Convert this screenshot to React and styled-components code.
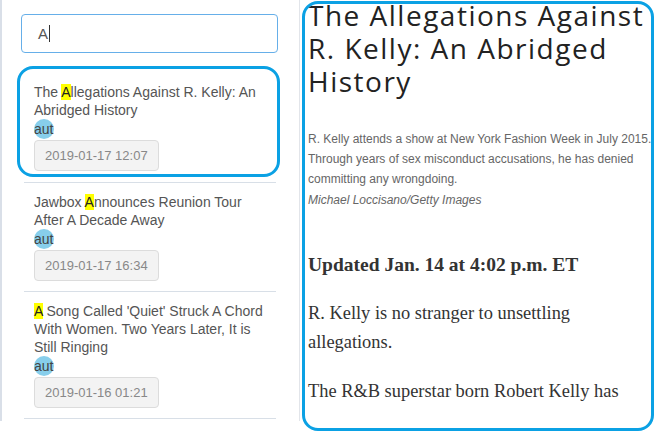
import React from 'react';
import styled, { createGlobalStyle } from 'styled-components';

const GlobalStyle = createGlobalStyle`
  html, body {
    margin: 0;
    padding: 0;
    background: #ffffff;
  }
  * {
    box-sizing: border-box;
  }
`;

// layout
const Page = styled.div`
  display: flex;
  align-items: flex-start;
  width: 655px;
  height: 439px;
  overflow: hidden;
  font-family: 'Liberation Sans', Arial, sans-serif;
`;

const Sidebar = styled.div`
  width: 300px;
  height: 421px;
  flex-shrink: 0;
  border-left: 2px solid #d9dfe8;
  border-right: 1px solid #e2e5ea;
  padding-top: 14px;
`;

const SearchBox = styled.div`
  display: flex;
  align-items: center;
  margin-left: 19px;
  width: 257px;
  height: 39px;
  padding-left: 16px;
  border: 1px solid #66afe9;
  border-radius: 4px;
  font-size: 15px;
  color: #555;
`;

const Caret = styled.span`
  display: inline-block;
  width: 1px;
  height: 17px;
  margin-left: 1px;
  background: #333;
`;

const List = styled.ul`
  list-style: none;
  margin: 13px 0 0 22px;
  padding: 0;
  width: 252px;
`;

const Entry = styled.li`
  padding: ${(p) => (p.$active ? '0 0 5px 0' : '10px 10px 10px')};
  border-bottom: 1px solid #d8dfe7;
`;

const ActiveCard = styled.div`
  margin: 0 -4px 0 -7px;
  padding: 14px 10px 3px 14px;
  border: 3px solid #0ba1e4;
  border-radius: 16px;
`;

const Title = styled.div`
  font-size: 14px;
  line-height: 18px;
  color: #555;
`;

const Mark = styled.span`
  background: #ffff00;
  color: #222;
`;

const Tag = styled.span`
  display: inline-block;
  min-width: 20px;
  height: 20px;
  line-height: 20px;
  border-radius: 50%;
  background: #87ceeb;
  font-size: 14px;
  color: #444;
`;

const DateBox = styled.div`
  display: inline-block;
  margin-top: 1px;
  padding: 0 10px;
  height: 31px;
  line-height: 29px;
  background: #f3f3f3;
  border: 1px solid #dcdcdc;
  border-radius: 4px;
  font-size: 13px;
  color: #888;
`;

const Reader = styled.div`
  width: 352px;
  height: 430px;
  margin: 1px 0 0 2px;
  border: 3px solid #0ba1e4;
  border-radius: 16px;
  padding: 0 0 0 3px;
  overflow: hidden;
`;

const Headline = styled.h1`
  margin: -5px 0 0;
  font-family: 'Open Sans', sans-serif;
  font-weight: 400;
  font-size: 28px;
  line-height: 33px;
  color: #222;
  letter-spacing: 1.5px;
`;

const Caption = styled.p`
  margin: 31px 0 0;
  font-size: 12px;
  line-height: 20px;
  color: #666;
  white-space: nowrap;
`;

const Credit = styled.p`
  margin: 1px 0 0;
  font-size: 12px;
  line-height: 20px;
  font-style: italic;
  color: #666;
`;

const Body = styled.p`
  margin: ${(p) => p.$top || '20px'} 0 0;
  font-family: 'Liberation Serif', Georgia, serif;
  font-size: ${(p) => (p.$bold ? '19.5px' : '18.4px')};
  line-height: 29px;
  color: #333;
  font-weight: ${(p) => (p.$bold ? 700 : 400)};
`;

const items = [
  { pre: 'The ', hit: 'A', post: 'llegations Against R. Kelly: An Abridged History', date: '2019-01-17 12:07' },
  { pre: 'Jawbox ', hit: 'A', post: 'nnounces Reunion Tour After A Decade Away', date: '2019-01-17 16:34' },
  { pre: '', hit: 'A', post: " Song Called 'Quiet' Struck A Chord With Women. Two Years Later, It is Still Ringing", date: '2019-01-16 01:21' },
];

const ItemBody = ({ item }) => (
  <>
    <Title>
      {item.pre}
      <Mark>{item.hit}</Mark>
      {item.post}
    </Title>
    <Tag>aut</Tag>
    <div>
      <DateBox>{item.date}</DateBox>
    </div>
  </>
);

const App = () => {
  return (
    <Page>
      <GlobalStyle />
      <Sidebar>
        <SearchBox>
          A<Caret />
        </SearchBox>
        <List>
          {items.map((item, i) => (
            <Entry key={item.date} $active={i === 0}>
              {i === 0 ? (
                <ActiveCard>
                  <ItemBody item={item} />
                </ActiveCard>
              ) : (
                <ItemBody item={item} />
              )}
            </Entry>
          ))}
        </List>
      </Sidebar>

      <Reader>
        <Headline>The Allegations Against R. Kelly: An Abridged History</Headline>
        <Caption>
          R. Kelly attends a show at New York Fashion Week in July 2015.
          <br />
          Through years of sex misconduct accusations, he has denied
          <br />
          committing any wrongdoing.
        </Caption>
        <Credit>Michael Loccisano/Getty Images</Credit>
        <Body $bold $top="40px">Updated Jan. 14 at 4:02 p.m. ET</Body>
        <Body $top="20px">R. Kelly is no stranger to unsettling<br />allegations.</Body>
        <Body>The R&amp;B superstar born Robert Kelly has</Body>
      </Reader>
    </Page>
  );
};

export default App;
